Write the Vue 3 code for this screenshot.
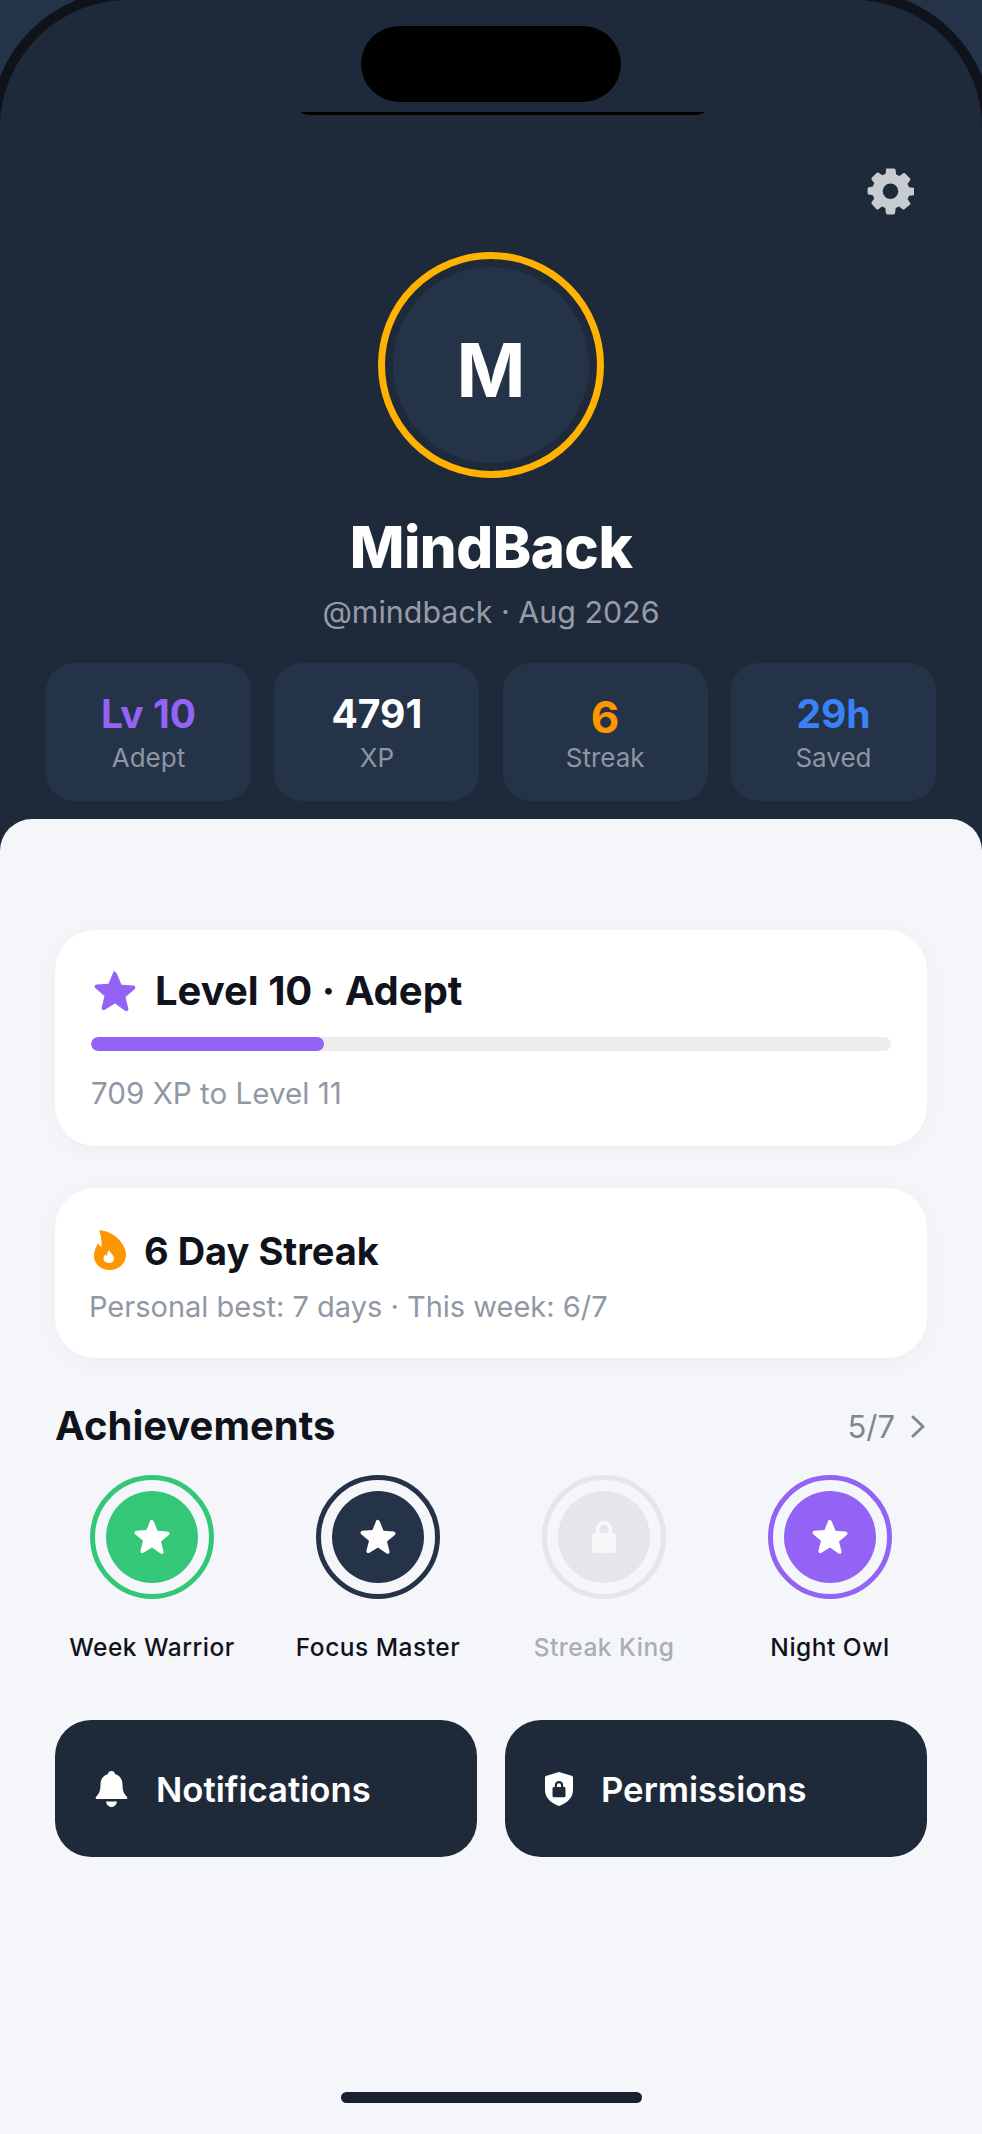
<template>
  <div class="screen">
    <header class="hero">
      <div class="island"></div>
      <div class="island-line"></div>
      <div class="hero-top">
        <svg class="gear" viewBox="0 0 47 47">
          <path fill="#c7ccd1" fill-rule="evenodd" d="M20 .6h7c.9 0 1.5.6 1.600 1.400l.6 4.400c1.200.4 2.300.9 3.300 1.500l3.600-2.600c.7-.5 1.500-.4 2.100.2l4.700 4.700c.6.6.7 1.400.2 2.100l-2.600 3.600c.6 1 1.100 2.100 1.500 3.300l4.400.6c.8.1 1.400.8 1.400 1.600v4.200c0 .8-.6 1.500-1.400 1.600l-4.400.6c-.4 1.200-.9 2.300-1.500 3.300l2.600 3.600c.5.7.4 1.500-.2 2.100L37.700 41c-.6.6-1.400.7-2.100.2L32 38.600c-1 .6-2.100 1.100-3.300 1.500l-.6 4.900c-.1.8-.8 1.400-1.600 1.400h-6c-.8 0-1.500-.6-1.600-1.400l-.6-4.900c-1.200-.4-2.300-.9-3.300-1.500l-3.600 2.600c-.7.5-1.500.4-2.100-.2L4.900 36.200c-.6-.6-.7-1.400-.2-2.100l2.600-3.600c-.6-1-1.100-2.100-1.500-3.300L2 26.600C1.200 26.500.6 25.800.6 25v-4.200c0-.8.6-1.500 1.400-1.600l3.800-.6c.4-1.200.9-2.300 1.500-3.300l-2.600-3.600c-.5-.7-.4-1.500.2-2.100L9.600 4.900c.6-.6 1.400-.7 2.100-.2l3.600 2.600c1-.6 2.100-1.100 3.300-1.500l.6-4.400C18.300 1.200 19.100.6 20 .6zM23.500 15.500a7.800 7.800 0 1 0 0 15.600 7.800 7.800 0 0 0 0-15.600z"/>
        </svg>
      </div>
      <div class="avatar"><div class="avatar-inner">M</div></div>
      <h1 class="name">MindBack</h1>
      <p class="handle">@mindback · Aug 2026</p>
      <div class="stats">
        <div v-for="s in stats" :key="s.label" class="stat">
          <span class="stat-value" :class="s.cls">{{ s.value }}</span>
          <span class="stat-label">{{ s.label }}</span>
        </div>
      </div>
    </header>

    <main class="sheet">
      <section class="card level-card">
        <div class="card-title level-title">
          <svg class="title-star" viewBox="0 0 24 24"><path fill="#9263f5" d="M12 1.300c.5 0 .9.300 1.100.800l2.600 6.300 6.800.5c1.100.1 1.500 1.400.7 2.100l-5.200 4.400 1.600 6.600c.3 1.100-.9 1.900-1.800 1.300L12 19.100l-5.800 3.600c-.9.600-2.100-.2-1.800-1.300L6 14.800.8 10.400C0 9.700.4 8.400 1.500 8.300l6.800-.5 2.600-6.300c.2-.5.600-.8 1.100-.8z"/></svg>
          <span>Level 10 · Adept</span>
        </div>
        <div class="track"><div class="fill" :style="{ width: levelPct + '%' }"></div></div>
        <p class="card-sub">709 XP to Level 11</p>
      </section>

      <section class="card streak-card">
        <div class="card-title">
          <svg class="flame" viewBox="0 0 32 40">
            <path fill="#ff9500" d="M5 .5C12-.5 22 5 27 12c3 4 5 8 5 13 0 8-7 15-16 15S0 34 0 26c0-5 2-9 4-13 1 2 2 3.500 3.500 4C8 11 7 5 5 .5z"/>
            <path fill="#fff" d="M15 20c1 3 5 5 5 8.500 0 2.500-2 4.500-5 4.500s-5.500-2-5.500-4.500c0-2 1-3 2-4 .5 1 1 1.500 1.500 1.500 0-2 .5-4 2-6z"/>
          </svg>
          <span>6 Day Streak</span>
        </div>
        <p class="card-sub">Personal best: 7 days · This week: 6/7</p>
      </section>

      <div class="ach-head">
        <h2>Achievements</h2>
        <div class="ach-count">
          <span>5/7</span>
          <svg width="14" height="23" viewBox="0 0 14 23"><path d="M2 2l10 9.500L2 21" fill="none" stroke="#7f8792" stroke-width="3" stroke-linecap="round" stroke-linejoin="round"/></svg>
        </div>
      </div>
      <div class="badges">
        <div v-for="b in badges" :key="b.name" class="badge" :class="b.cls">
          <div class="badge-ring">
            <div class="badge-core">
              <svg v-if="!b.locked" width="36" height="36" viewBox="0 0 24 24"><path fill="#fff" d="M12 .8c.6 0 1 .3 1.200.9l2.500 6.200 6.700.5c1.200.1 1.700 1.500.8 2.300l-5.200 4.300 1.700 6.600c.3 1.200-1 2.100-2 1.400L12 19l-5.700 3.500c-1 .7-2.300-.2-2-1.400L6 14.500.8 10.200C-.1 9.400.4 8 1.600 7.900l6.700-.5 2.500-6.200c.2-.6.6-.9 1.200-.4z"/></svg>
              <svg v-else width="24" height="32" viewBox="0 0 24 32"><path fill="#f7f7f9" fill-rule="evenodd" d="M12 0c4.700 0 8 3.400 8 8v4h1.500c1.400 0 2.500 1.100 2.500 2.500v15c0 1.400-1.100 2.500-2.500 2.500h-19C1.100 32 0 30.900 0 29.500v-15C0 13.100 1.100 12 2.500 12H4V8c0-4.600 3.300-8 8-8zm0 3.500c-2.700 0-4.500 1.900-4.500 4.500v4h9V8c0-2.600-1.800-4.500-4.500-4.500z"/></svg>
            </div>
          </div>
          <span class="badge-name">{{ b.name }}</span>
        </div>
      </div>

      <div class="actions">
        <button class="action">
          <svg width="33" height="36" viewBox="0 0 33 36">
            <path fill="#fff" d="M16.500 0c2 0 3.300 1.300 3.500 3 4.800 1.400 7.500 5.300 7.500 10.500 0 5.500 1.200 9 4.400 12.200.9.900.3 2.300-1 2.300H2.100c-1.300 0-1.900-1.400-1-2.300C4.300 22.500 5.500 19 5.500 13.500 5.500 8.300 8.200 4.400 13 3c.2-1.700 1.500-3 3.500-3z"/>
            <path fill="#fff" d="M11 30.500h11c-.5 3.200-2.700 5.500-5.500 5.500S11.500 33.700 11 30.500z"/>
          </svg>
          <span class="action-notif">Notifications</span>
        </button>
        <button class="action">
          <svg width="28" height="34" viewBox="0 0 28 34">
            <path fill="#fff" fill-rule="evenodd" d="M14 0l12.500 3.700c.9.300 1.500 1.100 1.500 2V18c0 7.500-5.500 12.700-13.300 15.800-.4.200-1 .2-1.400 0C5.500 30.700 0 25.500 0 18V5.700c0-.9.600-1.700 1.500-2L14 0zm0 9c-2.500 0-4.200 1.800-4.200 4.200V15H9c-.8 0-1.500.7-1.500 1.500v7.200c0 .8.700 1.500 1.500 1.500h10c.8 0 1.500-.7 1.500-1.500v-7.200c0-.8-.7-1.500-1.500-1.500h-.8v-1.800C18.200 10.800 16.500 9 14 9zm0 2.300c1.200 0 2 .8 2 2V15h-4v-1.700c0-1.200.8-2 2-2z"/>
          </svg>
          <span class="action-perm">Permissions</span>
        </button>
      </div>
    </main>

    <div class="home-bar"></div>
    <div class="device-edge"></div>
  </div>
</template>

<script setup>
const stats = [
  { value: 'Lv 10', label: 'Adept', cls: 'purple' },
  { value: '4791', label: 'XP', cls: '' },
  { value: '6', label: 'Streak', cls: 'orange' },
  { value: '29h', label: 'Saved', cls: 'blue' },
]

const badges = [
  { name: 'Week Warrior', cls: 'green' },
  { name: 'Focus Master', cls: 'navy' },
  { name: 'Streak King', cls: 'locked', locked: true },
  { name: 'Night Owl', cls: 'violet' },
]

const levelPct = 29.1
</script>

<style>
html, body { margin: 0; background: #253349; }
</style>

<style scoped>
.screen {
  position: relative; width: 982px; height: 2134px; overflow: hidden;
  display: flex; flex-direction: column;
  background: #1e2a3a;
  font-family: Inter, "Liberation Sans", sans-serif;
}
/* top corners of the phone: dark rim, then the page colour outside it */
.device-edge {
  position: absolute; left: 0; right: 0; top: 0; height: 2500px;
  border-radius: 128px 128px 0 0; pointer-events: none;
  box-shadow: 0 0 0 10px #11131a, 0 0 0 160px #253349;
}
.hero { position: relative; height: 819px; flex: none; padding-top: 168px; box-sizing: border-box; display: flex; flex-direction: column; align-items: center; }
.island { position: absolute; left: 361px; top: 26px; width: 260px; height: 76px; border-radius: 38px; background: #000; }
.island-line { position: absolute; left: 301px; top: 112px; width: 403px; height: 3px; background: #000; border-radius: 0 0 10px 10px / 0 0 3px 3px; }
.hero-top { align-self: stretch; display: flex; justify-content: flex-end; padding-right: 68px; height: 47px; }
.gear { width: 47px; height: 47px; }
.avatar {
  margin-top: 37px; width: 226px; height: 226px; box-sizing: border-box;
  border: 7px solid #ffb300; border-radius: 50%; padding: 8px;
}
.avatar-inner {
  width: 100%; height: 100%; border-radius: 50%; background: #253349; box-sizing: border-box; padding-top: 9px;
  display: flex; align-items: center; justify-content: center;
  color: #fff; font-size: 74px; font-weight: 700; line-height: 1;
}
.name { margin: 35px 0 0; font-size: 58px; line-height: 68px; font-weight: 800; color: #fff; letter-spacing: -0.5px; }
.handle { margin: 11px 0 0; font-size: 30.400px; line-height: 40px; color: #969ca7; }
.stats { align-self: stretch; margin-top: 31px; padding: 0 46px; display: grid; grid-template-columns: repeat(4, 1fr); gap: 23.33px; }
.stat {
  height: 138px; box-sizing: border-box; padding-top: 29px; border-radius: 28px; background: #253349;
  display: flex; flex-direction: column; align-items: center;
}
.stat-value { font-size: 39px; line-height: 44px; font-weight: 700; color: #fff; }
.stat-label { margin-top: 5px; font-size: 26px; line-height: 34px; color: #8e96a3; }
.purple { color: #9263f5; }
.blue { color: #3b82f6; }
.orange { color: #ff9500; font-size: 44px; line-height: 50px; }
.orange + .stat-label { margin-top: -1px; }
.sheet {
  flex: 1; background: #f5f6fa; border-radius: 32px 32px 0 0;
  padding: 111px 55px 0; display: flex; flex-direction: column;
}
.card { background: #fff; border-radius: 40px; box-shadow: 0 4px 24px rgba(20, 30, 50, 0.04); box-sizing: border-box; }
.level-card { height: 216px; padding: 37px 36px 0; }
.streak-card { height: 170px; margin-top: 42px; padding: 39px 34px 0; }
.card-title { display: flex; align-items: center; font-size: 38px; line-height: 48px; font-weight: 700; color: #11131c; }
.level-title { font-size: 40px; }
.title-star { width: 42px; height: 42px; margin-left: 3px; margin-right: 19px; }
.flame { width: 32px; height: 40px; margin: -3px 18px 0 5px; }
.track { margin-top: 22px; height: 14px; border-radius: 7px; background: #ececef; overflow: hidden; }
.fill { height: 100%; border-radius: 7px; background: #9263f5; }
.card-sub { margin: 0; font-size: 29px; line-height: 40px; color: #9098a4; }
.level-card .card-sub { margin-top: 22px; font-size: 29.600px; }
.streak-card .card-sub { margin-top: 12px; }
.ach-head { margin-top: 44px; display: flex; align-items: center; justify-content: space-between; height: 48px; }
.ach-head h2 { margin: 0; font-size: 40px; line-height: 48px; font-weight: 700; color: #11131c; }
.ach-count { display: flex; align-items: center; gap: 16px; font-size: 31px; color: #7f8792; padding-right: 2px; }
.badges { margin: 25px -16px 0; display: grid; grid-template-columns: repeat(4, 1fr); }
.badge { display: flex; flex-direction: column; align-items: center; gap: 32px; }
.badge-ring {
  width: 124px; height: 124px; box-sizing: border-box; border: 5.500px solid currentColor; border-radius: 50%;
  display: flex; align-items: center; justify-content: center;
}
.badge-core { width: 92px; height: 92px; border-radius: 50%; background: currentColor; display: flex; align-items: center; justify-content: center; }
.badge-name { font-size: 24.500px; line-height: 32px; font-weight: 500; letter-spacing: 0.5px; color: #11131c; }
.green .badge-ring { color: #34c778; }
.navy .badge-ring { color: #253349; }
.violet .badge-ring { color: #9263f5; }
.locked .badge-ring { color: #e6e6ea; }
.locked .badge-name { color: #a9aeb6; }
.actions { margin-top: 57px; display: grid; grid-template-columns: 1fr 1fr; gap: 28px; }
.action {
  height: 137px; border: 0; border-radius: 36px; background: #1e2a3a; padding: 0 0 0 40px;
  display: flex; align-items: center; color: #fff;
  font-family: inherit; font-size: 34.700px; font-weight: 600;
}
.action-notif { margin-left: 28px; }
.action-perm { margin-left: 28px; }
.home-bar { position: absolute; left: 341px; bottom: 31px; width: 301px; height: 11px; border-radius: 6px; background: #1a2030; }
</style>
